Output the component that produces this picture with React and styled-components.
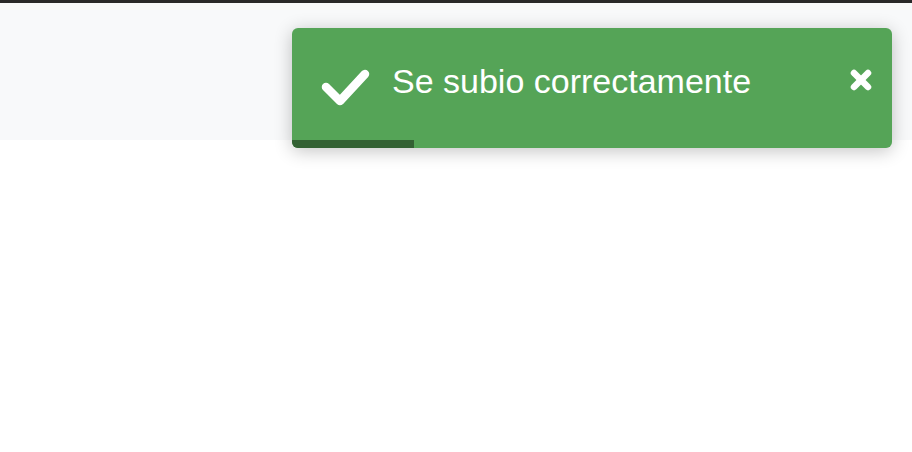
import styled, { createGlobalStyle } from "styled-components";

const GlobalStyle = createGlobalStyle`
  html, body {
    margin: 0;
    padding: 0;
    background: #ffffff;
    font-family: "Liberation Sans", Arial, sans-serif;
  }
`;

const Page = styled.div`
  position: relative;
  width: 100%;
  min-height: 452px;
  background: #ffffff;
`;

const TopBar = styled.div`
  height: 3px;
  background: #292929;
`;

const Header = styled.div`
  height: 137px;
  background: #f8f9fa;
`;

// toast flotante, va encima del header
const Toast = styled.div`
  position: absolute;
  top: 28px;
  right: 20px;
  width: 600px;
  height: 120px;
  display: flex;
  flex-direction: column;
  background: #55a457;
  border-radius: 6px;
  overflow: hidden;
  box-shadow: 0 3px 18px rgba(0, 0, 0, 0.24);
  color: #ffffff;
`;

const Body = styled.div`
  flex: 1;
  display: flex;
  align-items: flex-start;
  padding: 33px 20px 0 26px;
`;

const IconWrap = styled.div`
  margin-top: ${(p) => p.$offset}px;
  flex-shrink: 0;
  display: flex;
`;

const Message = styled.div`
  flex: 1;
  margin-left: 22px;
  font-size: 34px;
  line-height: 40px;
  white-space: nowrap;
`;

const CloseButton = styled.button`
  margin-top: 8px;
  padding: 0;
  border: none;
  background: transparent;
  cursor: pointer;
  display: flex;
`;

const ProgressTrack = styled.div`
  height: 8px;
`;

const ProgressFill = styled.div`
  height: 100%;
  width: ${(p) => p.$value}%;
  background: #336133;
`;

function CheckIcon() {
  return (
    <svg width="52" height="42" viewBox="0 0 52 42">
      <polyline
        points="8,21 22,35 47,8"
        fill="none"
        stroke="#ffffff"
        strokeWidth="8.5"
        strokeLinecap="round"
        strokeLinejoin="round"
      />
    </svg>
  );
}

function CloseIcon() {
  return (
    <svg width="22" height="22" viewBox="0 0 22 22">
      <g stroke="#ffffff" strokeWidth="6.5" strokeLinecap="round">
        <line x1="4" y1="4" x2="18" y2="18" />
        <line x1="18" y1="4" x2="4" y2="18" />
      </g>
    </svg>
  );
}

export default function App() {
  const progreso = 20.3;
  return (
    <>
      <GlobalStyle />
      <Page>
        <TopBar />
        <Header />
        <Toast>
          <Body>
            <IconWrap $offset={5}>
              <CheckIcon />
            </IconWrap>
            <Message>Se subio correctamente</Message>
            <CloseButton aria-label="Cerrar">
              <CloseIcon />
            </CloseButton>
          </Body>
          <ProgressTrack>
            <ProgressFill $value={progreso} />
          </ProgressTrack>
        </Toast>
      </Page>
    </>
  );
}
